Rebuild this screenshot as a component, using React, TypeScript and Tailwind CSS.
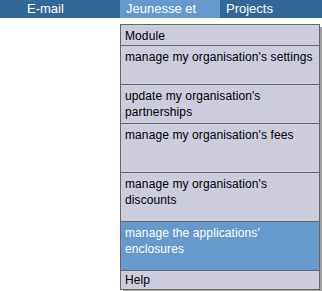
const items = [
  { label: "manage my organisation's settings", h: "h-[39px]" },
  { label: "update my organisation's partnerships", h: "h-[39px]" },
  { label: "manage my organisation's fees", h: "h-[49px]" },
  { label: "manage my organisation's discounts", h: "h-[49px]" },
  { label: "manage the applications' enclosures", h: "h-[49px]", active: true },
];

export default function App() {
  return (
    <div className="relative w-[322px] h-[291px] bg-white overflow-hidden font-['Liberation_Sans',Arial,sans-serif] text-[12px]">
      <nav className="flex h-[18px] bg-[#336699] text-white text-[13px] leading-[18px]">
        <div className="w-[120px] pl-[27px]">E-mail</div>
        <div className="w-[100px] pl-[6px] bg-[#6699cc]">Jeunesse et</div>
        <div className="pl-[6px]">Projects</div>
      </nav>

      <div className="absolute left-[120px] top-[24px] w-[200px] border border-[#666666] bg-[#ccccdd] text-black shadow-[3px_3px_0_#a0a0a0] leading-[16px] tracking-[0.1px]">
        <div className="h-[21px] px-[4px] pt-[3px] border-b border-[#666666]">Module</div>
        {items.map((it) => (
          <div
            key={it.label}
            className={`${it.h} px-[4px] pt-[3px] border-b border-[#666666] ${it.active ? "bg-[#6699cc] text-white" : ""}`}
          >
            {it.label}
          </div>
        ))}
        <div className="h-[18px] px-[4px] pt-[1px]">Help</div>
      </div>
    </div>
  );
}
